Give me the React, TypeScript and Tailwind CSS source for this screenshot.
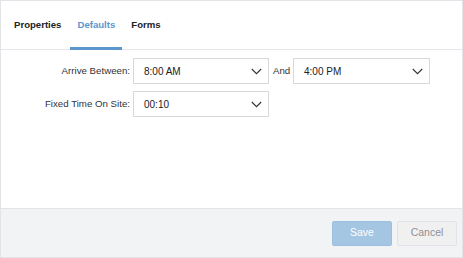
import React from "react";

const Chevron = () => (
  <svg width="11" height="7" viewBox="0 0 11 7" fill="none">
    <path d="M0.8 1 L5.5 5.7 L10.2 1" stroke="#333" strokeWidth="1.1" />
  </svg>
);

const Select = ({ value, w }: { value: string; w: string }) => (
  <div className={`${w} h-[26px] border border-[#d6d8dc] bg-white flex items-center justify-between pl-[10px] pr-[6px] text-[10px] text-[#222]`}>
    <span>{value}</span>
    <Chevron />
  </div>
);

export default function App() {
  return (
    <div
      className="w-[463px] h-[258px] border border-[#e3e4e8] bg-white flex flex-col"
      style={{ fontFamily: '"Liberation Sans", Arial, sans-serif' }}
    >
      <div className="h-[49px] border-b border-[#e5e6ea] flex items-stretch pl-[13px] text-[9.6px] font-bold">
        <div className="flex items-center pr-[9px] text-[#222]">Properties</div>
        <div className="flex items-center px-[7px] text-[#5b96cc] border-b-[3px] border-[#5b96cc] pt-[3px] mb-[-1px]">Defaults</div>
        <div className="flex items-center pl-[9px] text-[#222]">Forms</div>
      </div>
      <div className="flex-1 flex flex-col gap-[7px] pt-[8px] text-[9.7px] text-[#333]">
        <div className="flex items-center">
          <div className="w-[132px] text-right pr-[3px]">Arrive Between:</div>
          <Select value="8:00 AM" w="w-[136px]" />
          <div className="w-[24px] pl-[4px]">And</div>
          <Select value="4:00 PM" w="w-[137px]" />
        </div>
        <div className="flex items-center">
          <div className="w-[132px] text-right pr-[3px]">Fixed Time On Site:</div>
          <Select value="00:10" w="w-[136px]" />
        </div>
      </div>
      <div className="h-[49px] border-t border-[#e3e4e8] bg-[#f2f3f5] flex items-center justify-end gap-[5px] pr-[5px] text-[10.5px]">
        <button className="w-[60px] h-[25px] rounded-[2px] bg-[#a4c6e3] text-white border border-[#9bbfde]">Save</button>
        <button className="w-[60px] h-[25px] rounded-[2px] bg-[#f0f0f1] text-[#8f9195] border border-[#e2e3e6]">Cancel</button>
      </div>
    </div>
  );
}
